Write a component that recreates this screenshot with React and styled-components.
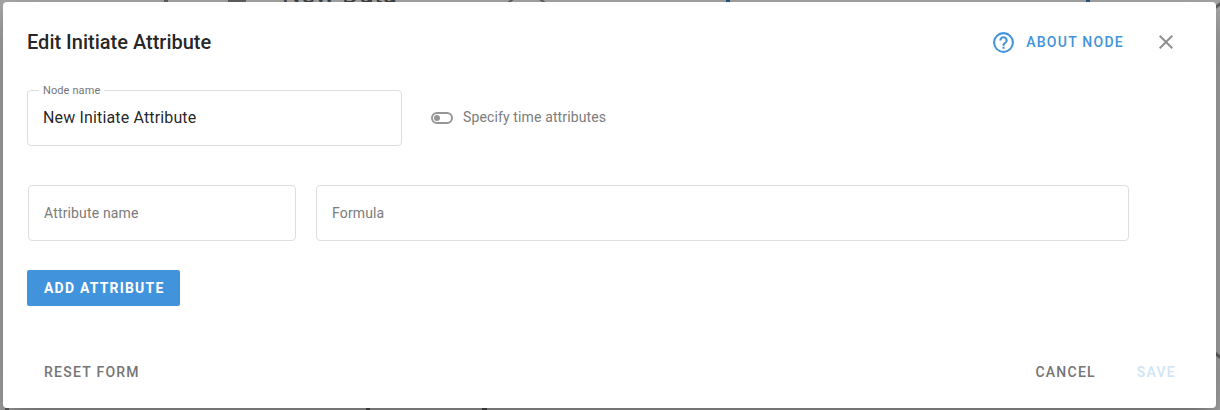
import React from "react";
import styled, { createGlobalStyle } from "styled-components";

const Global = createGlobalStyle`
  *, *::before, *::after { box-sizing: border-box; }
  body { margin: 0; font-family: Roboto, sans-serif; }
`;

const Backdrop = styled.div`
  position: relative;
  height: 410px;
  padding: 2px 4px 2px 3px;
  background: #a9a9a9;
  overflow: hidden;
`;

const CanvasEdge = styled.span`
  position: absolute;
  left: ${(p) => p.$x}px;
  top: ${(p) => p.$y || 0}px;
  width: ${(p) => p.$w || 4}px;
  height: ${(p) => p.$h || 2}px;
  background: ${(p) => p.$color || "#626262"};
  transform: rotate(${(p) => p.$turn || 0}deg);
`;

const NodeTitle = styled.span`
  position: absolute;
  left: 282px;
  top: -20px;
  font-size: 26px;
  line-height: 28px;
  letter-spacing: 0.4px;
  color: #3f4145;
  white-space: nowrap;
`;

const Dialog = styled.section`
  position: relative;
  height: 406px;
  display: flex;
  flex-direction: column;
  background: #fff;
  border-radius: 4px;
  box-shadow: 0 11px 15px -7px rgba(0, 0, 0, 0.2),
    0 24px 38px 3px rgba(0, 0, 0, 0.14),
    0 9px 46px 8px rgba(0, 0, 0, 0.12);
`;

const Header = styled.header`
  display: flex;
  align-items: center;
  height: 80px;
  padding: 0 38px 0 24px;
`;

const Title = styled.h1`
  flex: 1;
  margin: 0;
  font-size: 20px;
  font-weight: 500;
  line-height: 32px;
  color: rgba(0, 0, 0, 0.87);
`;

const TextButton = styled.button`
  display: inline-flex;
  align-items: center;
  height: 36px;
  padding: 0;
  border: 0;
  background: none;
  font: 500 14px/20px Roboto, sans-serif;
  letter-spacing: 1.25px;
  color: ${(p) => p.$color || "#757575"};
  white-space: nowrap;
`;

const AboutButton = styled(TextButton)`
  gap: 10px;
  margin-right: 30px;
`;

const Icon = styled.svg`
  display: block;
  flex: none;
  width: ${(p) => p.$size || 24}px;
  height: ${(p) => p.$size || 24}px;
  fill: currentColor;
`;

const CloseButton = styled.button`
  padding: 0;
  border: 0;
  background: none;
  color: #8f8f8f;
`;

const Content = styled.div`
  flex: 1;
  padding: 8px 24px 0;
`;

const Row = styled.div`
  display: flex;
  align-items: center;
`;

const AttributeRow = styled(Row)`
  gap: 20px;
  margin: 39px 0 29px 1px;
`;

const Field = styled.fieldset`
  width: ${(p) => p.$width}px;
  height: ${(p) => (p.$labelled ? 62 : 56)}px;
  margin: ${(p) => (p.$labelled ? "-6px" : 0)} 0 0;
  padding: 0 15px;
  min-width: 0;
  border: 1px solid #dedede;
  border-radius: 4px;
`;

const Legend = styled.legend`
  height: 12px;
  margin-left: -4px;
  padding: 0 4px;
  font-size: 11px;
  line-height: 14px;
  letter-spacing: 0.1px;
  color: #757575;
`;

const Input = styled.input`
  display: block;
  width: 100%;
  height: ${(p) => (p.$size === 16 ? 42 : 54)}px;
  padding: 0;
  border: 0;
  outline: 0;
  background: none;
  font: 400 ${(p) => p.$size}px/20px Roboto, sans-serif;
  letter-spacing: 0.15px;
  color: rgba(0, 0, 0, 0.87);
  &::placeholder { color: #7b7b7b; opacity: 1; }
`;

const Toggle = styled.label`
  display: flex;
  align-items: center;
  gap: 9px;
  margin-left: 28px;
  color: #969696;
`;

const ToggleText = styled.span`
  padding-bottom: 2px;
  font-size: 14px;
  line-height: 20px;
  letter-spacing: 0.13px;
  color: #7b7b7b;
`;

const AddButton = styled(TextButton)`
  width: 153px;
  padding-left: 17px;
  border-radius: 2px;
  background: #4193db;
  color: #fff;
  font-weight: 700;
  letter-spacing: 1.2px;
`;

const Footer = styled.footer`
  display: flex;
  align-items: center;
  height: 72px;
  padding: 0 40px 0 41px;
`;

const FooterActions = styled.div`
  display: flex;
  gap: 41px;
  margin-left: auto;
`;

const HELP = "M11,18H13V16H11V18M12,2A10,10 0 0,0 2,12A10,10 0 0,0 12,22A10,10 0 0,0 22,12A10,10 0 0,0 12,2M12,20C7.59,20 4,16.41 4,12C4,7.59 7.59,4 12,4C16.41,4 20,7.59 20,12C20,16.41 16.41,20 12,20M12,6A4,4 0 0,0 8,10H10A2,2 0 0,1 12,8A2,2 0 0,1 14,10C14,12 11,11.75 11,15H13C13,12.75 16,12.5 16,10A4,4 0 0,0 12,6Z";
const CLOSE = "M19,6.41L17.59,5L12,10.59L6.41,5L5,6.41L10.59,12L5,17.59L6.41,19L12,13.41L17.59,19L19,17.59L13.41,12L19,6.41Z";
const TOGGLE_OFF = "M17 6H7a6 6 0 0 0 0 12h10a6 6 0 0 0 0-12m0 10H7a4 4 0 0 1 0-8h10a4 4 0 0 1 0 8M7 9a3 3 0 1 0 0 6 3 3 0 0 0 0-6";

function Glyph({ d, size }) {
  return <Icon viewBox="0 0 24 24" $size={size} aria-hidden="true"><path d={d} /></Icon>;
}

export default function App() {
  return (
    <>
      <Global />
      <Backdrop>
        <CanvasEdge $x={164} />
        <CanvasEdge $x={228} $w={18} />
        <NodeTitle>New Data</NodeTitle>
        <CanvasEdge $x={507} $w={7} $turn={-35} />
        <CanvasEdge $x={539} $w={7} $turn={35} />
        <CanvasEdge $x={726} $color="#24588a" />
        <CanvasEdge $x={1086} $color="#24588a" />
        <CanvasEdge $x={1212} $y={4} $w={12} $h={3} $turn={-35} />
        <CanvasEdge $x={1212} $y={354} $w={12} $h={3} $turn={38} />
        <CanvasEdge $x={5} $y={408} $color="#606060" />
        <CanvasEdge $x={366} $y={408} $color="#505050" />
        <CanvasEdge $x={482} $y={408} $w={5} $color="#505050" />
        <Dialog role="dialog" aria-label="Edit Initiate Attribute">
          <Header>
            <Title>Edit Initiate Attribute</Title>
            <AboutButton $color="#4193db"><Glyph d={HELP} size={25} />ABOUT NODE</AboutButton>
            <CloseButton aria-label="Close"><Glyph d={CLOSE} /></CloseButton>
          </Header>
          <Content>
            <Row>
              <Field $width={375} $labelled>
                <Legend>Node name</Legend>
                <Input $size={16} defaultValue="New Initiate Attribute" aria-label="Node name" />
              </Field>
              <Toggle><Glyph d={TOGGLE_OFF} /><ToggleText>Specify time attributes</ToggleText></Toggle>
            </Row>
            <AttributeRow>
              <Field $width={268}><Input $size={14} placeholder="Attribute name" /></Field>
              <Field $width={813}><Input $size={14} placeholder="Formula" /></Field>
            </AttributeRow>
            <AddButton>ADD ATTRIBUTE</AddButton>
          </Content>
          <Footer>
            <TextButton>RESET FORM</TextButton>
            <FooterActions>
              <TextButton>CANCEL</TextButton>
              <TextButton $color="#d0e4f6" disabled>SAVE</TextButton>
            </FooterActions>
          </Footer>
        </Dialog>
      </Backdrop>
    </>
  );
}
